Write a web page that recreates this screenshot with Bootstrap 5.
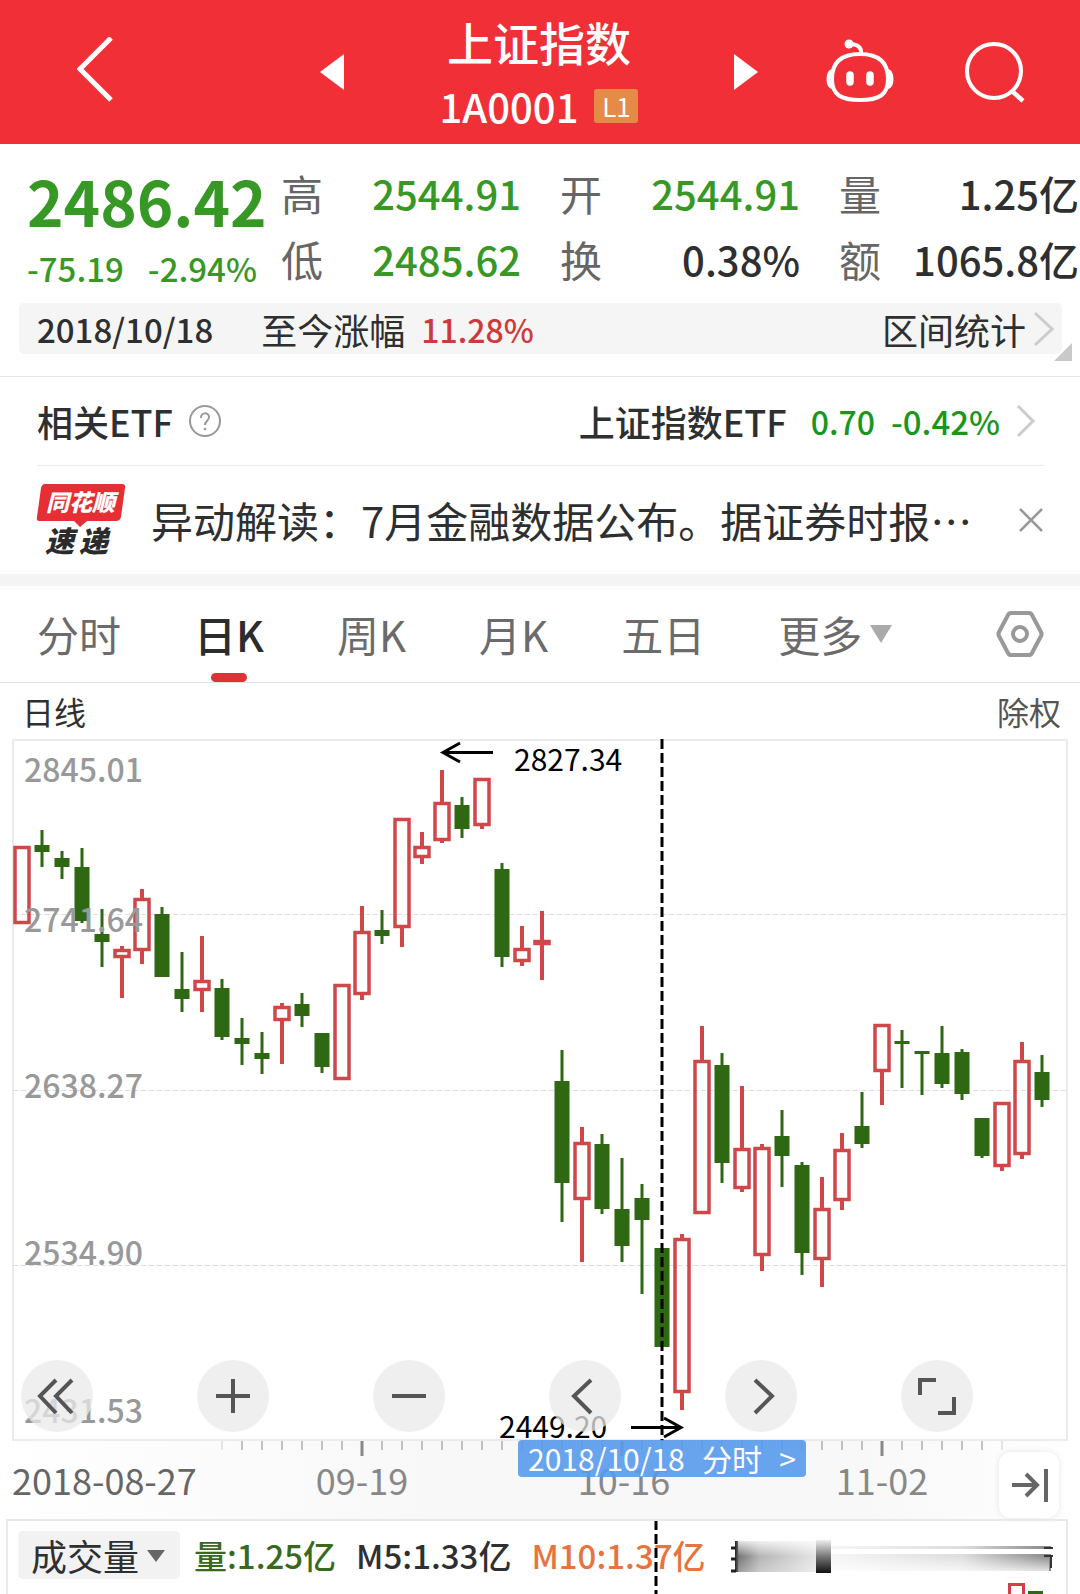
<!DOCTYPE html>
<html lang="zh-CN">
<head>
<meta charset="utf-8">
<meta name="viewport" content="width=device-width, initial-scale=1">
<title>上证指数 1A0001</title>
<link href="https://cdn.jsdelivr.net/npm/bootstrap@5.3.0/dist/css/bootstrap.min.css" rel="stylesheet">
<style>
  body { font-family: "Noto Sans CJK SC", "Noto Sans", sans-serif; color: #2e2f31; background: #fff; overflow-x: hidden; }
  svg { display: block; flex: none; }
  button, a { color: inherit; }
  .bare { border: 0; background: none; padding: 0; text-decoration: none; }
  .fs-s { font-size: 32px; line-height: 40px; }
  .fs-n { font-size: 33px; line-height: 40px; }
  .fs-m { font-size: 36px; line-height: 48px; }
  .fs-l { font-size: 42px; line-height: 56px; }
  .up { color: #d0393b; }
  .down { color: #379826; }
  .etf-down { color: #1a961c; }
  .soft { color: #555; }

  .topbar { height: 144px; background: #f12f37; color: #fff; padding: 0 53px 0 77px; }
  .topbar .heading { font-size: 46px; line-height: 68px; font-weight: 500; }
  .topbar .ticker { font-size: 40px; line-height: 62px; font-weight: 500; }
  .level { font-size: 26px; line-height: 34px; width: 44px; background: #e58b47; border-radius: 3px; text-align: center; }
  .switcher { width: 438px; margin: 0 67px 0 207px; }
  .tools { gap: 70px; }

  .quote { padding: 16px 1px 0 27px; height: 159px; }
  .last-price { width: 254px; flex: none; }
  .price { font-size: 62px; line-height: 80px; font-weight: 700; }
  .stats { column-gap: 39px; }
  .stats > div { flex: 1 1 0; min-width: 0; }
  .stats dt { font-size: 42px; line-height: 66px; font-weight: 400; color: #666; }
  .stats dd { font-size: 40px; line-height: 66px; font-weight: 500; white-space: nowrap; margin: 0; }
  .period { margin: 0 18px 22px 19px; padding: 0 8px 0 18px; height: 51px; background: #f5f5f5; border-radius: 5px; }
  .corner { right: 8px; top: 199px; }

  .etf-row { height: 89px; margin: 0 36px 0 37px; padding-right: 8px; border-bottom: 1px solid #ececec; }
  .rule { border-top: 1px solid #e6e6e6; }
  .news { height: 108px; padding: 0 37px; }
  .news .headline { margin-left: 26px; }
  .news svg { overflow: visible; }
  .band { height: 12px; background: #f4f4f4; }

  .tabs { height: 97px; padding: 0 36px 0 37px; gap: 73px; border-bottom: 1px solid #e3e3e3; color: #6b6b6b; }
  .tabs .current { color: #2b2c2e; font-weight: 500; }
  .tabs .current::after { content: ""; position: absolute; left: 50%; bottom: -20px; width: 36px; height: 9px; margin-left: -18px; border-radius: 5px; background: #dd3338; }
  .subbar { height: 56px; padding: 0 19px 0 22px; }

  .chart svg.plot { width: 100%; height: auto; overflow: visible; }
  .plot text { font-family: "Noto Sans CJK SC", sans-serif; }
  .scale text { font-size: 32px; fill: #999; font-weight: 500; }
  .mark-text { font-size: 30px; fill: #000; }
  .dates text { font-size: 36px; fill: #888; text-anchor: middle; }
  .dates .first { text-anchor: start; fill: #666; }
  .controls { left: 21px; bottom: 87px; gap: 104px; }
  .round { width: 72px; height: 72px; border-radius: 50%; background: rgba(233,233,233,.75); }
  .tip { left: 61.3%; bottom: 42px; transform: translateX(-50%); width: 288px; height: 37px; font-size: 30px; line-height: 37px; color: #fff; background: rgba(88,154,236,.9); border-radius: 4px; padding: 0 10px; }
  .to-end { right: 21px; bottom: 1px; width: 60px; height: 66px; background: #fff; border-radius: 12px; box-shadow: 0 0 6px rgba(0,0,0,.1); }

  .volume { margin: 0 12px 0 6px; height: 75px; border: 2px solid #e9e9e9; border-bottom: 0; padding: 10px 10px 0; overflow: hidden; }
  .pick { width: 162px; height: 48px; }
  .pick select { appearance: none; width: 100%; height: 48px; border: 0; border-radius: 5px; background: #f2f2f2; padding: 0 0 0 13px; color: inherit; }
  .pick svg { right: 15px; top: 19px; pointer-events: none; }
  .ma { gap: 20px; margin-left: 14px; }
  .vol { color: #39691c; }
  .ma10 { color: #e9733d; }
  .smear { left: 722px; top: 18px; }
  .cursor { left: 646px; top: -1px; }
  .bars { right: 22px; bottom: 0; }
</style>
<script src="https://cdn.jsdelivr.net/npm/bootstrap@5.3.0/dist/js/bootstrap.bundle.min.js"></script>
</head>
<body>

<header class="topbar d-flex align-items-center">
  <button class="bare" aria-label="返回"><svg width="36" height="70" viewBox="0 0 36 70" fill="none" stroke="#fff" stroke-width="5"><path d="M34 1 3 32l31 31"/></svg></button>
  <div class="switcher d-flex align-items-center justify-content-between">
    <button class="bare" aria-label="上一个"><svg width="24" height="36" viewBox="0 0 24 36" fill="#fff"><path d="M24 0v36L0 18z"/></svg></button>
    <div class="text-center">
      <div class="heading">上证指数</div>
      <div class="d-flex align-items-center gap-3"><span class="ticker">1A0001</span><span class="level">L1</span></div>
    </div>
    <button class="bare" aria-label="下一个"><svg width="24" height="36" viewBox="0 0 24 36" fill="#fff"><path d="M0 0v36l24-18z"/></svg></button>
  </div>
  <div class="tools d-flex align-items-center">
    <button class="bare" aria-label="智能助手"><svg width="70" height="66" viewBox="0 0 70 66" fill="none" stroke="#fff" stroke-width="4">
      <path d="M35 15C54 15 63 24 63 40S54 61 35 61 7 56 7 40 16 15 35 15z"/><path d="M36 15C37 8 32 5 24 5"/>
      <circle cx="24" cy="5" r="4.500" fill="#fff" stroke="none"/><path d="M7 31C1 33 1 47 7 49zM63 31c6 2 6 16 0 18z" fill="#fff" stroke-width="2"/>
      <path d="M25 36v7M45 36v7" stroke-width="7.500" stroke-linecap="round"/></svg></button>
    <button class="bare" aria-label="搜索"><svg width="60" height="62" viewBox="0 0 60 62" fill="none" stroke="#fff" stroke-width="4"><circle cx="29" cy="30" r="27"/><path d="m47 50 11 10" stroke-width="4.500"/></svg></button>
  </div>
</header>

<main class="position-relative">
<section>
  <div class="quote d-flex">
    <div class="last-price down">
      <div class="price">2486.42</div>
      <div class="fs-n d-flex fw-medium mt-2"><span class="me-4">-75.19</span><span>-2.94%</span></div>
    </div>
    <dl class="stats d-flex flex-fill mb-0">
      <div>
        <div class="d-flex justify-content-between"><dt>高</dt><dd class="down">2544.91</dd></div>
        <div class="d-flex justify-content-between"><dt>低</dt><dd class="down">2485.62</dd></div>
      </div>
      <div>
        <div class="d-flex justify-content-between"><dt>开</dt><dd class="down">2544.91</dd></div>
        <div class="d-flex justify-content-between"><dt>换</dt><dd>0.38%</dd></div>
      </div>
      <div>
        <div class="d-flex justify-content-between"><dt>量</dt><dd>1.25亿</dd></div>
        <div class="d-flex justify-content-between"><dt>额</dt><dd>1065.8亿</dd></div>
      </div>
    </dl>
  </div>
  <div class="period d-flex align-items-center">
    <span class="fs-n fw-medium">2018/10/18</span>
    <span class="fs-m ms-5">至今涨幅</span>
    <span class="fs-s fw-medium up ms-3">11.28%</span>
    <a class="bare ms-auto d-flex align-items-center gap-2" href="#"><span class="fs-m">区间统计</span>
      <svg width="20" height="36" viewBox="0 0 20 36" fill="none" stroke="#ccc" stroke-width="3"><path d="m1 2 17 16L1 34"/></svg></a>
  </div>
  <svg class="corner position-absolute" width="18" height="18" viewBox="0 0 18 18" fill="#c9c9c9"><path d="M18 0v18H0z"/></svg>
</section>

<div class="rule"></div>
<section class="etf-row d-flex align-items-center">
  <span class="fs-m fw-medium">相关ETF</span>
  <button class="bare ms-3" aria-label="说明"><svg width="32" height="32" viewBox="0 0 32 32" fill="none" stroke="#999" stroke-width="2"><circle cx="16" cy="16" r="15"/><path d="M12 13c0-6 8-6 8-1 0 4-4 4-4 8"/><circle cx="16" cy="24" r="1" fill="#999" stroke-width="1"/></svg></button>
  <a class="bare ms-auto d-flex align-items-center" href="#"><span class="fs-m fw-medium">上证指数ETF</span>
    <span class="fs-s fw-medium etf-down ms-4">0.70</span><span class="fs-n fw-medium etf-down ms-3">-0.42%</span>
    <svg class="ms-3" width="20" height="34" viewBox="0 0 20 34" fill="none" stroke="#ccc" stroke-width="3"><path d="m2 2 15 15L2 32"/></svg></a>
</section>

<section class="news d-flex align-items-center">
  <svg width="88" height="72" viewBox="0 0 88 72" font-family="Noto Sans CJK SC, sans-serif" font-weight="900" font-style="italic">
    <path d="M8 0h77q4 0 3 4l-4 29q-1 4-5 4H50l-7 6-6-6H3q-4 0-3-4L4 4q1-4 4-4z" fill="#e62f34"/>
    <text x="9" y="27" font-size="23" fill="#fff">同花顺</text>
    <text x="8" y="68" font-size="29" fill="#2b2b2b">速</text><text x="42" y="68" font-size="29" fill="#2b2b2b">递</text>
  </svg>
  <a class="bare headline fs-l text-nowrap" href="#">异动解读：7月金融数据公布。据证券时报⋯</a>
  <button class="bare ms-auto" aria-label="关闭"><svg width="24" height="24" viewBox="0 0 24 24" stroke="#999" stroke-width="2.500"><path d="m1 1 22 22M23 1 1 23"/></svg></button>
</section>
<div class="band"></div>

<nav class="tabs fs-l d-flex align-items-center">
  <a class="bare" href="#">分时</a>
  <a class="bare current position-relative" href="#">日K</a>
  <a class="bare" href="#">周K</a>
  <a class="bare" href="#">月K</a>
  <a class="bare" href="#">五日</a>
  <a class="bare d-flex align-items-center gap-2" href="#">更多<svg width="22" height="18" viewBox="0 0 22 18" fill="#aaa"><path d="M0 0h22L11 18z"/></svg></a>
  <button class="bare ms-auto" aria-label="设置"><svg width="48" height="46" viewBox="0 0 48 46" fill="none" stroke="#999" stroke-width="4"><path d="M15 2h18q2 0 3 2l9 17q1 2 0 4l-9 17q-1 2-3 2H15q-2 0-3-2L3 25q-1-2 0-4L12 4q1-2 3-2z"/><circle cx="24" cy="23" r="7"/></svg></button>
</nav>

<div class="subbar fs-s d-flex align-items-center justify-content-between"><span>日线</span><span class="soft">除权</span></div>

<section class="chart position-relative">
  <svg class="plot" viewBox="0 739 1080 780" role="img" aria-label="日K线图">
    <defs><linearGradient id="shade" x1="0" x2="1"><stop offset="0" stop-color="#fff"/><stop offset=".4" stop-color="#f8f8f8"/><stop offset=".8" stop-color="#f8f8f8"/><stop offset="1" stop-color="#fff"/></linearGradient></defs>
    <rect x="0" y="1441" width="1080" height="78" fill="url(#shade)"/>
    <rect x="13" y="740" width="1054" height="700" fill="none" stroke="#ebebeb" stroke-width="2"/>
    <path d="M13 914.500H1067M13 1090.500H1067M13 1265.500H1067" stroke="#ddd" stroke-dasharray="5 3"/>
    <g id="candles"></g>
    <path d="M662 739V1441" stroke="#000" stroke-width="3" stroke-dasharray="10 4"/>
    <g class="scale">
      <text x="24" y="782">2845.01</text><text x="24" y="932">2741.64</text><text x="24" y="1098">2638.27</text>
      <text x="24" y="1265">2534.90</text><text x="24" y="1423">2431.53</text>
    </g>
    <g fill="none" stroke="#000" stroke-width="3"><path d="M493 752.500H443M460 743l-17 9.500 17 9.500"/><path d="M631 1427.500h50M664 1418l17 9.500-17 9.500"/></g>
    <text class="mark-text" x="514" y="771">2827.34</text>
    <text class="mark-text" x="499" y="1438">2449.20</text>
    <g id="ticks" stroke="#888"></g>
    <g class="dates"><text class="first" x="12" y="1495">2018-08-27</text><text x="362" y="1495">09-19</text><text x="624" y="1495">10-16</text><text x="882" y="1495">11-02</text></g>
  </svg>

  <div class="controls position-absolute d-flex">
    <button class="bare round" aria-label="快退"><svg width="72" height="72" fill="none" stroke="#555" stroke-width="4"><path d="M35 20 19 36l16 17M51 20 35 36l16 17"/></svg></button>
    <button class="bare round" aria-label="放大"><svg width="72" height="72" stroke="#555" stroke-width="4"><path d="M19 36h34M36 19v34"/></svg></button>
    <button class="bare round" aria-label="缩小"><svg width="72" height="72" stroke="#555" stroke-width="4"><path d="M19 36h34"/></svg></button>
    <button class="bare round" aria-label="左移"><svg width="72" height="72" fill="none" stroke="#555" stroke-width="4"><path d="M42 20 25 36l17 17"/></svg></button>
    <button class="bare round" aria-label="右移"><svg width="72" height="72" fill="none" stroke="#555" stroke-width="4"><path d="m30 20 17 16-17 17"/></svg></button>
    <button class="bare round" aria-label="全屏"><svg width="72" height="72" fill="none" stroke="#555" stroke-width="4"><path d="M35 20H19v15M37 53h16V37"/></svg></button>
  </div>
  <a class="bare tip position-absolute d-flex justify-content-between text-nowrap" href="#"><span>2018/10/18</span><span>分时</span><span>&gt;</span></a>
  <button class="bare to-end position-absolute" aria-label="跳到最新"><svg width="60" height="66" fill="none" stroke="#666" stroke-width="4"><path d="M13 33h25M27 22l11 11-11 11M47 17v33"/></svg></button>
</section>

<section class="volume position-relative d-flex align-items-start">
  <div class="pick position-relative">
    <select class="fs-m" aria-label="指标"><option>成交量</option></select>
    <svg class="position-absolute" width="18" height="12" viewBox="0 0 18 12" fill="#666"><path d="M0 0h18L9 12z"/></svg>
  </div>
  <div class="ma fs-n d-flex text-nowrap fw-medium mt-1"><span class="vol">量:1.25亿</span><span>M5:1.33亿</span><span class="ma10">M10:1.37亿</span></div>
  <svg class="smear position-absolute" width="326" height="36" viewBox="0 0 326 36">
    <defs>
      <linearGradient id="s1" x1="0" x2="1"><stop offset="0" stop-color="#222"/><stop offset=".05" stop-color="#777"/><stop offset=".3" stop-color="#b5b5b5"/><stop offset="1" stop-color="#e6e6e6"/></linearGradient>
      <linearGradient id="s2" x1="0" x2="1"><stop offset="0" stop-color="#f6f6f6"/><stop offset=".6" stop-color="#ddd"/><stop offset="1" stop-color="#888"/></linearGradient>
      <linearGradient id="s3" x1="0" x2="0" y1="0" y2="1"><stop offset="0" stop-color="#eee"/><stop offset=".5" stop-color="#777"/><stop offset="1" stop-color="#111"/></linearGradient>
      <linearGradient id="s4" x1="0" x2="0" y1="0" y2="1"><stop offset="0" stop-color="#fff" stop-opacity=".8"/><stop offset=".5" stop-color="#fff" stop-opacity="0"/><stop offset="1" stop-color="#fff" stop-opacity=".3"/></linearGradient>
      <linearGradient id="s5" x1="0" x2="0" y1="0" y2="1"><stop offset="0" stop-color="#fff" stop-opacity="0"/><stop offset="1" stop-color="#fff" stop-opacity=".8"/></linearGradient>
    </defs>
    <rect x="5" y="2" width="82" height="31" fill="url(#s1)"/><rect x="8" y="2" width="79" height="31" fill="url(#s4)"/>
    <path d="M1 9h5M1 20h5M1 32h5" stroke="#222" stroke-width="3"/>
    <rect x="101" y="7" width="220" height="3" fill="url(#s2)"/><rect x="101" y="15" width="220" height="17" fill="url(#s2)"/><rect x="101" y="17" width="218" height="16" fill="url(#s5)"/>
    <path d="M314 9h9M314 17h9M321 17v12" stroke="#333" stroke-width="2"/>
    <rect x="86" y="1" width="15" height="33" fill="url(#s3)"/>
  </svg>
  <svg class="cursor position-absolute" width="4" height="76"><path d="M2 0v76" stroke="#000" stroke-width="3" stroke-dasharray="10 4"/></svg>
  <svg class="bars position-absolute" width="36" height="11"><path d="M1.500 12V1.500h14V12" fill="none" stroke="#cf4146" stroke-width="3"/><rect x="20" y="8" width="15" height="4" fill="#2f6813"/></svg>
</section>
</main>

<script>
// Each candle: colour, high, body top, body bottom, low
const candles = [
 ['r',846,846,924,924],['g',830,845,852,867],['g',851,858,867,879],['g',848,867,921,923],['g',909,934,942,967],
 ['r',946,949,958,998],['r',889,898,951,964],['g',907,914,977,977],['g',952,989,999,1012],['r',936,980,991,1012],
 ['g',979,988,1037,1040],['g',1018,1038,1044,1065],['g',1032,1053,1059,1074],['r',1003,1006,1021,1064],['g',993,1004,1016,1027],
 ['g',1033,1033,1067,1073],['r',984,984,1080,1080],['r',906,931,995,1000],['g',910,930,936,944],['r',818,818,928,947],
 ['r',832,846,858,864],['r',770,802,841,843],['g',797,805,829,838],['r',778,778,826,829],['g',863,869,957,967],
 ['r',926,948,962,966],['r',911,940,945,980],['g',1050,1081,1183,1222],['r',1127,1142,1200,1262],['g',1134,1144,1209,1214],
 ['g',1158,1209,1246,1262],['g',1184,1198,1220,1294],['g',1248,1248,1347,1347],['r',1234,1238,1393,1410],['r',1026,1060,1214,1214],
 ['g',1053,1065,1163,1183],['r',1086,1148,1189,1192],['r',1144,1147,1256,1271],['g',1110,1136,1156,1187],['g',1162,1165,1253,1275],
 ['r',1177,1208,1260,1287],['r',1133,1149,1201,1210],['g',1092,1126,1144,1148],['r',1024,1024,1072,1105],['g',1030,1041,1044,1088],
 ['g',1051,1051,1054,1095],['g',1026,1053,1084,1088],['g',1049,1052,1094,1100],['g',1118,1118,1156,1158],['r',1102,1102,1167,1171],
 ['r',1042,1060,1155,1159],['g',1055,1072,1100,1107]];
document.getElementById('candles').innerHTML = candles.map(([c, hi, top, bot, lo], i) => {
  const x = 22 + 20 * i;
  if (c === 'g') return `<g fill="#2f6813"><rect x="${x - 1.5}" y="${hi}" width="3" height="${lo - hi}"/><rect x="${x - 7.5}" y="${top}" width="15" height="${bot - top}"/></g>`;
  return `<g stroke="#d0474a" stroke-width="4" fill="none"><path d="M${x} ${hi}V${top + 1}M${x} ${bot - 1}V${lo}"/><rect x="${x - 7}" y="${top + 1.5}" width="14" height="${bot - top - 3}" stroke-width="3.5"/></g>`;
}).join('');
let ticks = '';
for (let x = 222; x <= 1002; x += 20) {
  const major = x === 362 || x === 622 || x === 882;
  ticks += `<path d="M${x} 1441v${major ? 15 : 9}" stroke-width="${major ? 3 : 1}"${x === 222 || x === 1002 ? ' opacity=".4"' : ''}/>`;
}
document.getElementById('ticks').innerHTML = ticks;
</script>
</body>
</html>
